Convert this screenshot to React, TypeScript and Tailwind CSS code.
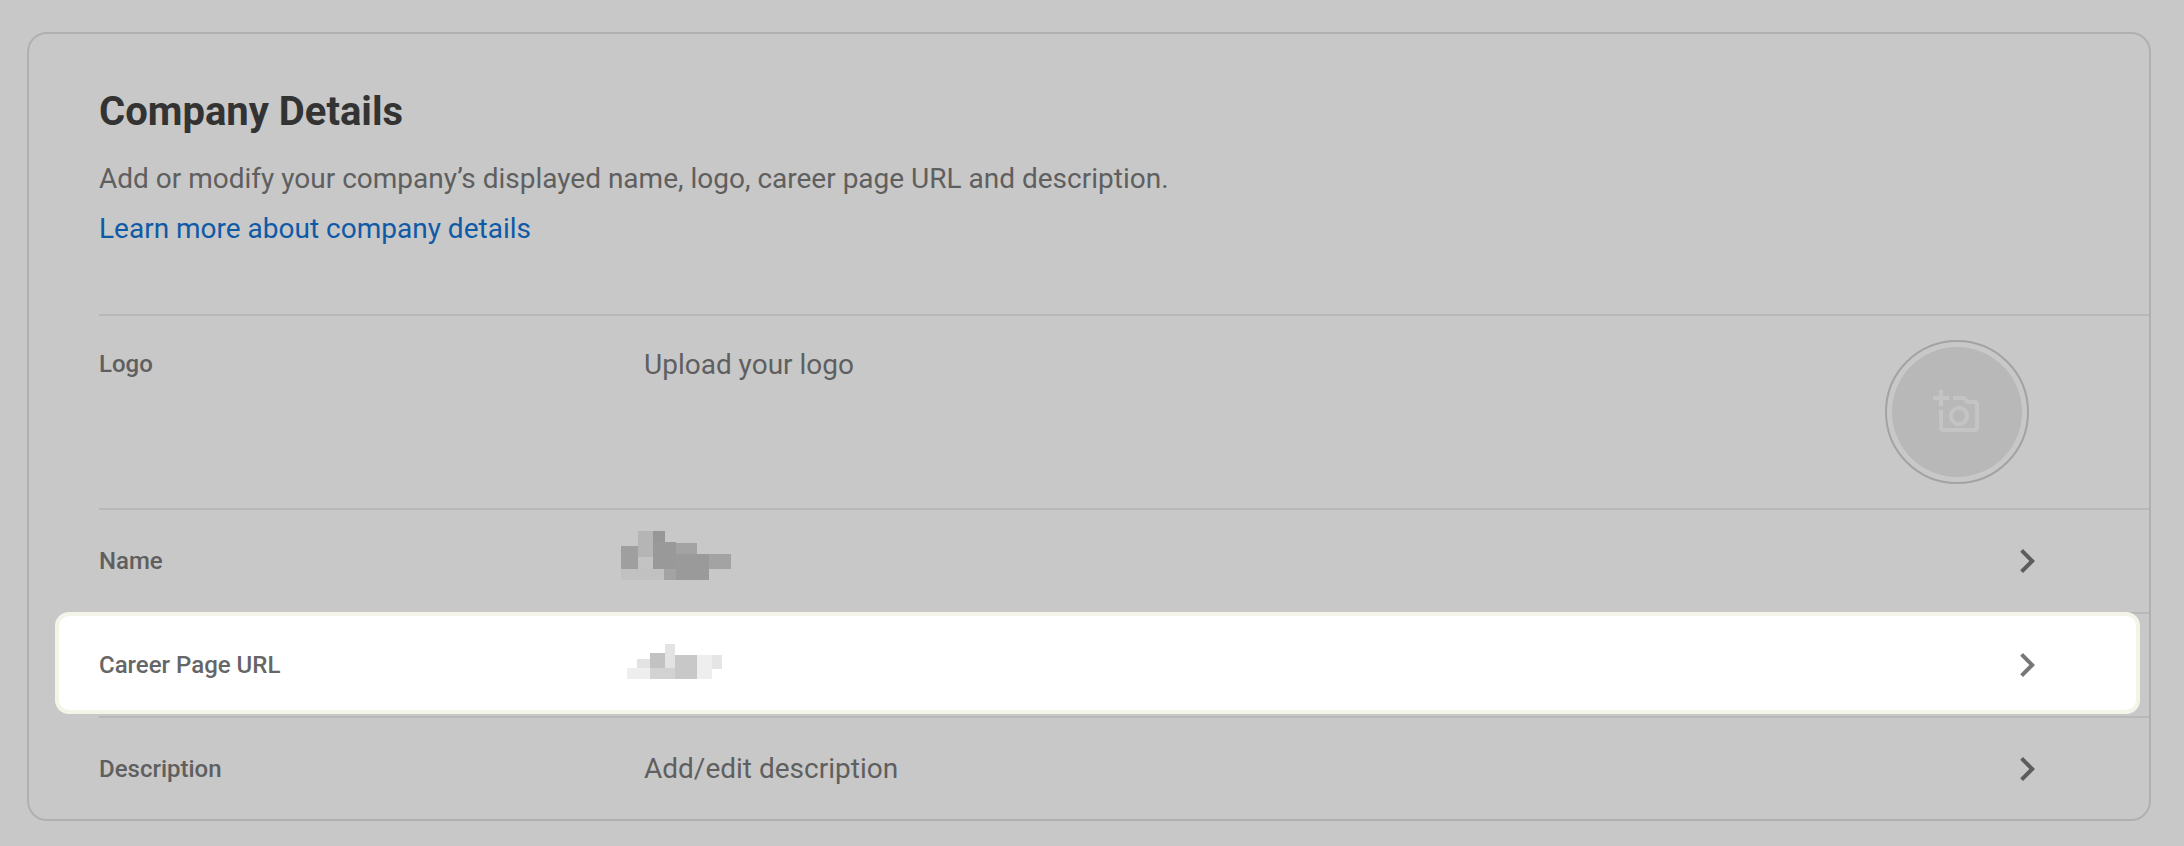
function Chevron({ dim }: { dim?: boolean }) {
  return (
    <svg viewBox="0 0 24 24" className={`w-12 h-12 shrink-0 mr-[98px] ${dim ? 'fill-[#777777]' : 'fill-[#5c5c5c]'}`}>
      <path d="M10 6L8.59 7.41 13.17 12l-4.58 4.59L10 18l6-6z" />
    </svg>
  );
}

// pixelated blobs, coords are 3x the screen px
const nameBlocks: [number, number, number, number, string][] = [
  [63, 177, 129, 33, '#c1c1c1'],
  [63, 108, 51, 69, '#9f9f9f'],
  [114, 63, 45, 78, '#b5b5b5'],
  [114, 141, 45, 36, '#c3c3c3'],
  [159, 63, 36, 33, '#979797'],
  [159, 96, 69, 81, '#999999'],
  [192, 177, 36, 33, '#a3a3a3'],
  [228, 99, 63, 33, '#a3a3a3'],
  [228, 132, 99, 78, '#9a9a9a'],
  [327, 132, 66, 45, '#a3a3a3'],
];

const urlBlocks: [number, number, number, number, string][] = [
  [195, 402, 30, 72, '#e3e3e3'],
  [150, 429, 45, 45, '#c2c2c2'],
  [111, 447, 39, 27, '#e3e3e3'],
  [81, 474, 69, 33, '#eeeeee'],
  [150, 474, 75, 33, '#d2d2d2'],
  [225, 435, 66, 72, '#c8c8c8'],
  [291, 435, 45, 72, '#eeeeee'],
  [336, 435, 30, 42, '#e5e5e5'],
];

function Blob({ blocks, y, h, className }: { blocks: [number, number, number, number, string][]; y: number; h: number; className: string }) {
  return (
    <svg viewBox={`0 ${y} 420 ${h}`} className={`w-[140px] shrink-0 -ml-[44px] ${className}`} style={{ height: h / 3 }} shapeRendering="crispEdges">
      {blocks.map(([bx, by, bw, bh, c], i) => (
        <rect key={i} x={bx} y={by} width={bw} height={bh} fill={c} />
      ))}
    </svg>
  );
}

export default function App() {
  return (
    <div className="h-[846px] bg-[#c8c8c8] pt-[32px] pl-[27px] pr-[33px] font-['Roboto',sans-serif]">
      <div className="h-[789px] border-2 border-[#b0b0b0] rounded-[20px] flex flex-col">
        {/* Header */}
        <div className="h-[280px] shrink-0 pl-[70px] pt-[56px]">
          <h1 className="text-[40px] leading-[44px] font-bold text-[#333333]">Company Details</h1>
          <p className="mt-[27px] text-[28px] leading-[36px] text-[#5f5f5f]">
            Add or modify your company’s displayed name, logo, career page URL and description.
          </p>
          <a className="block mt-[14px] text-[28px] leading-[36px] text-[#0f5aa6]">Learn more about company details</a>
        </div>

        {/* Logo */}
        <div className="h-[194px] shrink-0 ml-[70px] border-t-2 border-[#b8b8b8] flex items-start">
          <div className="w-[545px] shrink-0 pt-[32px] text-[24px] leading-[32px] font-medium text-[#5f5f5f]">Logo</div>
          <div className="flex-1 pt-[33px] text-[28px] leading-[32px] text-[#5f5f5f]">Upload your logo</div>
          <div className="mt-[24px] mr-[120px] w-[144px] h-[144px] rounded-full border-2 border-[#a3a3a3] p-[5px]">
            <div className="w-full h-full rounded-full bg-[#b8b8b8] flex items-center justify-center">
              <svg viewBox="0 0 24 24" className="w-12 h-12 fill-[#c4c4c4]">
                <path d="M21 6h-3.17L16 4h-6v2h5.12l1.83 2H21v12H5v-9H3v9c0 1.1.9 2 2 2h16c1.1 0 2-.9 2-2V8c0-1.1-.9-2-2-2zM8 14c0 2.76 2.24 5 5 5s5-2.24 5-5-2.24-5-5-5-5 2.24-5 5zm5-3c1.65 0 3 1.35 3 3s-1.35 3-3 3-3-1.35-3-3 1.35-3 3-3zM5 6h3V4H5V1H3v3H0v2h3v3h2z" />
              </svg>
            </div>
          </div>
        </div>

        {/* Name */}
        <div className="h-[104px] shrink-0 ml-[70px] border-t-2 border-[#b8b8b8] flex items-center">
          <div className="w-[545px] shrink-0 text-[24px] leading-[32px] font-medium text-[#5f5f5f]">Name</div>
          <div className="flex-1 flex items-center">
            <Blob blocks={nameBlocks} y={63} h={147} className="mb-[11px]" />
          </div>
          <Chevron />
        </div>

        {/* Career page url, spotlighted */}
        <div className="relative h-[104px] shrink-0 ml-[70px] border-t-2 border-[#b8b8b8] flex items-center">
          <div className="absolute -left-[44px] right-[9px] -top-[2px] h-[102px] bg-white border-[4px] border-[#f4f4e8] rounded-[14px]" />
          <div className="relative w-[545px] shrink-0 text-[24px] leading-[32px] font-medium text-[#666666]">Career Page URL</div>
          <div className="relative flex-1 flex items-center">
            <Blob blocks={urlBlocks} y={402} h={105} className="mb-[7px]" />
          </div>
          <div className="relative flex">
            <Chevron dim />
          </div>
        </div>

        {/* Description */}
        <div className="flex-1 ml-[70px] border-t-2 border-[#b8b8b8] flex items-center">
          <div className="w-[545px] shrink-0 text-[24px] leading-[32px] font-medium text-[#5f5f5f]">Description</div>
          <div className="flex-1 text-[28px] leading-[32px] text-[#5f5f5f]">Add/edit description</div>
          <Chevron />
        </div>
      </div>
    </div>
  );
}
